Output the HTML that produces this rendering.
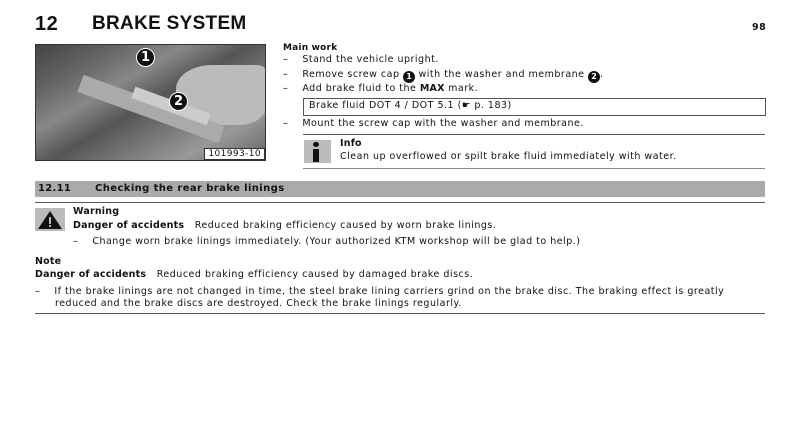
<!DOCTYPE html>
<html><head><meta charset="utf-8"><style>
body{margin:0;width:800px;height:421px;background:#fff;position:relative;font-family:"DejaVu Sans","Liberation Sans",sans-serif;color:#111;overflow:hidden}
.a{position:absolute;white-space:nowrap;font-size:9.5px;line-height:12px;letter-spacing:0.5px}
b{font-weight:bold;letter-spacing:0.2px}
.n{display:inline-block;width:12px;height:12px;border-radius:50%;background:#111;color:#fff;font-size:8px;line-height:12px;text-align:center;font-weight:bold;vertical-align:-2px;letter-spacing:0}
</style></head><body>
<div class="a" style="left:35px;top:11px;font-size:20px;line-height:26px;font-weight:bold;letter-spacing:0.5px;font-family:'Liberation Sans',sans-serif">12</div>
<div class="a" style="left:92px;top:11px;font-size:19px;line-height:26px;font-weight:bold;letter-spacing:0.3px;font-family:'Liberation Sans',sans-serif">BRAKE SYSTEM</div>
<div class="a" style="left:752px;top:22px;font-weight:bold">98</div>

<div style="position:absolute;left:35px;top:44px;width:229px;height:115px;border:1px solid #333;background:linear-gradient(150deg,#444 0%,#666 20%,#888 35%,#555 50%,#777 65%,#999 80%,#666 100%);overflow:hidden">
<div style="position:absolute;left:140px;top:20px;width:90px;height:60px;background:#bbb;border-radius:40% 10% 30% 50%"></div>
<div style="position:absolute;left:40px;top:55px;width:150px;height:18px;background:#aaa;transform:rotate(20deg)"></div>
<div style="position:absolute;left:95px;top:55px;width:80px;height:12px;background:#ccc;transform:rotate(20deg)"></div>
<div style="position:absolute;left:100px;top:3px;width:17px;height:17px;border-radius:50%;background:#111;border:1px solid #fff;color:#fff;font-weight:bold;font-size:13px;text-align:center;line-height:17px">1</div>
<div style="position:absolute;left:133px;top:47px;width:17px;height:17px;border-radius:50%;background:#111;border:1px solid #fff;color:#fff;font-weight:bold;font-size:13px;text-align:center;line-height:17px">2</div>
<div style="position:absolute;right:0;bottom:0;background:#fff;border:1px solid #333;font-size:9px;line-height:10px;padding:0 3px;letter-spacing:0.4px">101993-10</div>
</div>

<div class="a" style="left:283px;top:42px;font-size:9px;font-weight:bold;letter-spacing:0.2px">Main work</div>
<div class="a" style="left:283px;top:54px">–&nbsp;&nbsp;&nbsp;&nbsp;Stand the vehicle upright.</div>
<div class="a" style="left:283px;top:69px">–&nbsp;&nbsp;&nbsp;&nbsp;Remove screw cap <span class="n">1</span> with the washer and membrane <span class="n">2</span>.</div>
<div class="a" style="left:283px;top:83px">–&nbsp;&nbsp;&nbsp;&nbsp;Add brake fluid to the <b>MAX</b> mark.</div>
<div style="position:absolute;left:303px;top:98px;width:461px;height:16px;border:1px solid #555"></div>
<div class="a" style="left:309px;top:100px">Brake fluid DOT 4 / DOT 5.1 (☛ p. 183)</div>
<div class="a" style="left:283px;top:118px">–&nbsp;&nbsp;&nbsp;&nbsp;Mount the screw cap with the washer and membrane.</div>
<div style="position:absolute;left:303px;top:134px;width:462px;height:1px;background:#555"></div>
<div style="position:absolute;left:304px;top:140px;width:27px;height:23px;background:#bbb"></div>
<div style="position:absolute;left:313px;top:142px;width:6px;height:5px;background:#111;border-radius:50%"></div>
<div style="position:absolute;left:313px;top:149px;width:6px;height:13px;background:#111"></div>
<div class="a" style="left:340px;top:138px;font-weight:bold;letter-spacing:0.2px">Info</div>
<div class="a" style="left:340px;top:151px">Clean up overflowed or spilt brake fluid immediately with water.</div>
<div style="position:absolute;left:303px;top:168px;width:462px;height:1px;background:#888"></div>

<div style="position:absolute;left:35px;top:181px;width:730px;height:16px;background:#aaa"></div>
<div class="a" style="left:38px;top:183px;font-weight:bold;font-size:10px;letter-spacing:0.3px">12.11</div>
<div class="a" style="left:95px;top:183px;font-weight:bold;font-size:10px;letter-spacing:0.4px">Checking the rear brake linings</div>
<div style="position:absolute;left:35px;top:202px;width:730px;height:1px;background:#555"></div>

<div style="position:absolute;left:35px;top:208px;width:30px;height:23px;background:#bbb"></div>
<svg style="position:absolute;left:37px;top:210px" width="26" height="20"><polygon points="13,1 25,19 1,19" fill="#111"/><rect x="12" y="7" width="2" height="7" fill="#bbb"/><rect x="12" y="15" width="2" height="2" fill="#bbb"/></svg>
<div class="a" style="left:73px;top:206px;font-weight:bold;letter-spacing:0.2px">Warning</div>
<div class="a" style="left:73px;top:220px"><b>Danger of accidents</b>&nbsp;&nbsp;&nbsp;Reduced braking efficiency caused by worn brake linings.</div>
<div class="a" style="left:73px;top:236px">–&nbsp;&nbsp;&nbsp;&nbsp;Change worn brake linings immediately. (Your authorized KTM workshop will be glad to help.)</div>
<div class="a" style="left:35px;top:256px;font-weight:bold;letter-spacing:0.2px">Note</div>
<div class="a" style="left:35px;top:269px"><b>Danger of accidents</b>&nbsp;&nbsp;&nbsp;Reduced braking efficiency caused by damaged brake discs.</div>
<div class="a" style="left:35px;top:286px">–&nbsp;&nbsp;&nbsp;&nbsp;If the brake linings are not changed in time, the steel brake lining carriers grind on the brake disc. The braking effect is greatly</div>
<div class="a" style="left:55px;top:298px">reduced and the brake discs are destroyed. Check the brake linings regularly.</div>
<div style="position:absolute;left:35px;top:313px;width:730px;height:1px;background:#555"></div>
</body></html>
